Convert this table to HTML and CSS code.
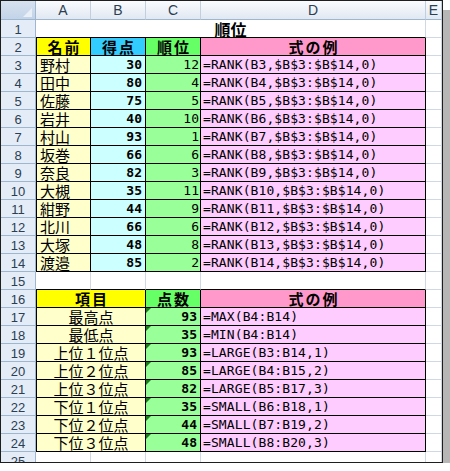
FILE: index.html
```html
<!DOCTYPE html>
<html lang="ja">
<head>
<meta charset="utf-8">
<title>順位</title>
<link rel="stylesheet" href="styles.css">
</head>
<body>
<div class="sheet">
  <div class="grid">
    <div class="corner"></div><div class="ch">A</div><div class="ch">B</div><div class="ch">C</div><div class="ch">D</div><div class="ch">E</div>

    <div class="rh">1</div><div class="c title span4">順位</div><div class="c"></div>

    <div class="rh">2</div><div class="c k hd y bl">名前</div><div class="c k hd cy">得点</div><div class="c k hd g">順位</div><div class="c k hd p">式の例</div><div class="c"></div>

    <div class="rh">3</div><div class="c k ly bl name">野村</div><div class="c k lc num b">30</div><div class="c k lg num n">12</div><div class="c k lp f">=RANK(B3,$B$3:$B$14,0)</div><div class="c"></div>
    <div class="rh">4</div><div class="c k ly bl name">田中</div><div class="c k lc num b">80</div><div class="c k lg num n">4</div><div class="c k lp f">=RANK(B4,$B$3:$B$14,0)</div><div class="c"></div>
    <div class="rh">5</div><div class="c k ly bl name">佐藤</div><div class="c k lc num b">75</div><div class="c k lg num n">5</div><div class="c k lp f">=RANK(B5,$B$3:$B$14,0)</div><div class="c"></div>
    <div class="rh">6</div><div class="c k ly bl name">岩井</div><div class="c k lc num b">40</div><div class="c k lg num n">10</div><div class="c k lp f">=RANK(B6,$B$3:$B$14,0)</div><div class="c"></div>
    <div class="rh">7</div><div class="c k ly bl name">村山</div><div class="c k lc num b">93</div><div class="c k lg num n">1</div><div class="c k lp f">=RANK(B7,$B$3:$B$14,0)</div><div class="c"></div>
    <div class="rh">8</div><div class="c k ly bl name">坂巻</div><div class="c k lc num b">66</div><div class="c k lg num n">6</div><div class="c k lp f">=RANK(B8,$B$3:$B$14,0)</div><div class="c"></div>
    <div class="rh">9</div><div class="c k ly bl name">奈良</div><div class="c k lc num b">82</div><div class="c k lg num n">3</div><div class="c k lp f">=RANK(B9,$B$3:$B$14,0)</div><div class="c"></div>
    <div class="rh">10</div><div class="c k ly bl name">大槻</div><div class="c k lc num b">35</div><div class="c k lg num n">11</div><div class="c k lp f">=RANK(B10,$B$3:$B$14,0)</div><div class="c"></div>
    <div class="rh">11</div><div class="c k ly bl name">紺野</div><div class="c k lc num b">44</div><div class="c k lg num n">9</div><div class="c k lp f">=RANK(B11,$B$3:$B$14,0)</div><div class="c"></div>
    <div class="rh">12</div><div class="c k ly bl name">北川</div><div class="c k lc num b">66</div><div class="c k lg num n">6</div><div class="c k lp f">=RANK(B12,$B$3:$B$14,0)</div><div class="c"></div>
    <div class="rh">13</div><div class="c k ly bl name">大塚</div><div class="c k lc num b">48</div><div class="c k lg num n">8</div><div class="c k lp f">=RANK(B13,$B$3:$B$14,0)</div><div class="c"></div>
    <div class="rh">14</div><div class="c k ly bl name">渡邉</div><div class="c k lc num b">85</div><div class="c k lg num n">2</div><div class="c k lp f">=RANK(B14,$B$3:$B$14,0)</div><div class="c"></div>

    <div class="rh">15</div><div class="c bb"></div><div class="c bb"></div><div class="c bb"></div><div class="c bb"></div><div class="c"></div>

    <div class="rh">16</div><div class="c k hd y bl span2">項目</div><div class="c k hd g">点数</div><div class="c k hd p">式の例</div><div class="c"></div>

    <div class="rh">17</div><div class="c k ly bl span2 ctr">最高点</div><div class="c k lg num b tri">93</div><div class="c k lp f">=MAX(B4:B14)</div><div class="c"></div>
    <div class="rh">18</div><div class="c k ly bl span2 ctr">最低点</div><div class="c k lg num b tri">35</div><div class="c k lp f">=MIN(B4:B14)</div><div class="c"></div>
    <div class="rh">19</div><div class="c k ly bl span2 ctr">上位１位点</div><div class="c k lg num b tri">93</div><div class="c k lp f">=LARGE(B3:B14,1)</div><div class="c"></div>
    <div class="rh">20</div><div class="c k ly bl span2 ctr">上位２位点</div><div class="c k lg num b tri">85</div><div class="c k lp f">=LARGE(B4:B15,2)</div><div class="c"></div>
    <div class="rh">21</div><div class="c k ly bl span2 ctr">上位３位点</div><div class="c k lg num b tri">82</div><div class="c k lp f">=LARGE(B5:B17,3)</div><div class="c"></div>
    <div class="rh">22</div><div class="c k ly bl span2 ctr">下位１位点</div><div class="c k lg num b tri">35</div><div class="c k lp f">=SMALL(B6:B18,1)</div><div class="c"></div>
    <div class="rh">23</div><div class="c k ly bl span2 ctr">下位２位点</div><div class="c k lg num b tri">44</div><div class="c k lp f">=SMALL(B7:B19,2)</div><div class="c"></div>
    <div class="rh">24</div><div class="c k ly bl span2 ctr">下位３位点</div><div class="c k lg num b tri">48</div><div class="c k lp f">=SMALL(B8:B20,3)</div><div class="c"></div>

    <div class="rh">25</div><div class="c"></div><div class="c"></div><div class="c"></div><div class="c"></div><div class="c"></div>
  </div>
</div>
</body>
</html>
```

FILE: styles.css
```css
html, body {
  margin: 0;
  padding: 0;
  background: #ffffff;
}

.sheet {
  box-sizing: border-box;
  width: 443px;
  height: 463px;
  border: 1px solid #1e1e1e;
  overflow: hidden;
  background: #ffffff;
  box-shadow: 9px 9px 0 -1px #b6b6b6;
}

.grid {
  display: grid;
  grid-template-columns: 35px 55px 55px 55px 225px 16px;
  grid-template-rows: 19px;
  grid-auto-rows: 18px;
}

.corner {
  position: relative;
  box-sizing: border-box;
  background: linear-gradient(#d7e2f0, #c3d3e8);
  border-right: 1px solid #9eb6ce;
  border-bottom: 1px solid #9eb6ce;
}

.corner::after {
  content: "";
  position: absolute;
  right: 3px;
  bottom: 2px;
  width: 0;
  height: 0;
  border-left: 9px solid transparent;
  border-bottom: 9px solid #e9eff7;
}

.ch {
  box-sizing: border-box;
  display: flex;
  align-items: center;
  justify-content: center;
  background: linear-gradient(#fafcfe, #e1e8f2);
  border-right: 1px solid #c2cfdf;
  border-bottom: 1px solid #9eb6ce;
  font-family: "Liberation Sans", Arial, sans-serif;
  font-size: 14px;
  line-height: 16px;
  color: #2b3e52;
}

.rh {
  box-sizing: border-box;
  display: flex;
  align-items: center;
  justify-content: center;
  padding-top: 1px;
  background: #e4ecf7;
  border-right: 1px solid #9eb6ce;
  border-bottom: 1px solid #9eb6ce;
  font-family: "Liberation Sans", Arial, sans-serif;
  font-size: 13px;
  line-height: 15px;
  color: #2b3e52;
}

.c {
  position: relative;
  box-sizing: border-box;
  display: flex;
  align-items: center;
  padding: 0 3px;
  border-right: 1px solid #d0d7e5;
  border-bottom: 1px solid #d0d7e5;
  font-family: "Noto Sans CJK JP", "Noto Sans", sans-serif;
  font-size: 15px;
  line-height: 16px;
  color: #000000;
  white-space: nowrap;
}

.k {
  border-right-color: #000000;
  border-bottom-color: #000000;
}

.bl {
  border-left: 1px solid #000000;
}

.bb {
  border-bottom-color: #000000;
}

.span4 { grid-column: span 4; }
.span2 { grid-column: span 2; }

.title {
  justify-content: center;
  font-weight: bold;
  font-size: 16px;
  border-bottom-color: #000000;
}

.hd {
  justify-content: center;
  font-weight: bold;
  letter-spacing: 2px;
  padding-left: 5px;
}

.y { background: #ffff00; }
.cy { background: #33ccff; }
.g { background: #66ff66; }
.p { background: #ff99cc; }
.ly { background: #ffffcc; }
.lc { background: #ccffff; }
.lg { background: #99ff99; }
.lp { background: #ffccff; }

.name {
  justify-content: flex-start;
}

.ctr {
  justify-content: center;
}

.num {
  justify-content: flex-end;
  font-family: "DejaVu Sans Mono", "Liberation Mono", monospace;
  font-size: 13px;
  line-height: 15px;
}

.num.b {
  font-weight: bold;
  padding-right: 3px;
}

.num.n {
  padding-right: 1px;
}

.f {
  font-family: "DejaVu Sans Mono", "Liberation Mono", monospace;
  font-size: 13px;
  line-height: 15px;
  letter-spacing: 0.1px;
  padding-left: 2px;
}

.tri::before {
  content: "";
  position: absolute;
  top: 0;
  left: 0;
  width: 0;
  height: 0;
  border-top: 5px solid #1f7a1f;
  border-right: 5px solid transparent;
}
```
